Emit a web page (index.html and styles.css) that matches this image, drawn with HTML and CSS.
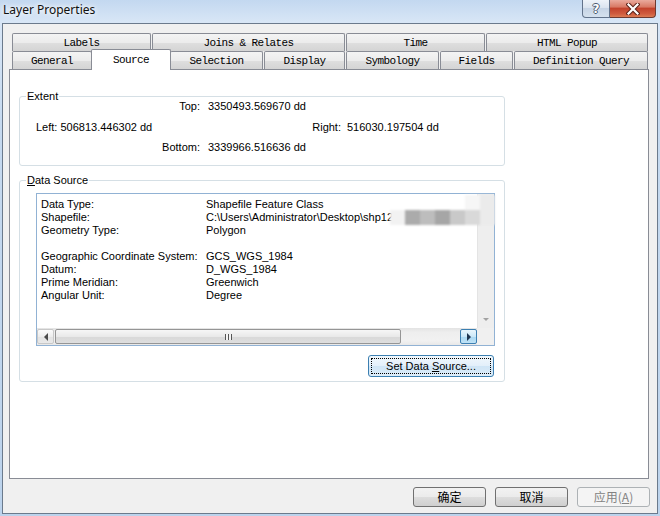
FILE: index.html
```html
<!DOCTYPE html>
<html>
<head>
<meta charset="utf-8">
<title>Layer Properties</title>
<link rel="stylesheet" href="styles.css">
</head>
<body>
<div class="window">
  <div class="titlebar">
    <div class="title">Layer Properties</div>
    <div class="caption">
      <div class="cap-btn help">?</div>
      <div class="cap-btn close">
        <svg width="14" height="12" viewBox="0 0 14 12"><path d="M2.5 1.5 L11.5 10.5 M11.5 1.5 L2.5 10.5" stroke="#5b2219" stroke-width="4.2" stroke-linecap="square"/><path d="M2.5 1.5 L11.5 10.5 M11.5 1.5 L2.5 10.5" stroke="#ffffff" stroke-width="2.2" stroke-linecap="square"/></svg>
      </div>
    </div>
  </div>
  <div class="client">
    <div class="tabs">
      <div class="tabrow">
        <div class="tab t-labels">Labels</div>
        <div class="tab t-joins">Joins &amp; Relates</div>
        <div class="tab t-time">Time</div>
        <div class="tab t-html">HTML Popup</div>
      </div>
      <div class="tabrow">
        <div class="tab t-general">General</div>
        <div class="tab sel">Source</div>
        <div class="tab t-selection">Selection</div>
        <div class="tab t-display">Display</div>
        <div class="tab t-symbology">Symbology</div>
        <div class="tab t-fields">Fields</div>
        <div class="tab t-defq">Definition Query</div>
      </div>
    </div>
    <div class="panel">
      <div class="group extent">
        <div class="gtitle">Extent</div>
        <div class="erow">
          <span class="lbl-top">Top:</span><span class="val-top">3350493.569670 dd</span>
        </div>
        <div class="erow mid">
          <span class="left">Left: 506813.446302 dd</span><span class="lbl-right">Right:</span><span class="val-right">516030.197504 dd</span>
        </div>
        <div class="erow bot">
          <span class="lbl-top">Bottom:</span><span class="val-top">3339966.516636 dd</span>
        </div>
      </div>
      <div class="group datasource">
        <div class="gtitle"><u>D</u>ata Source</div>
        <div class="list">
          <div class="list-content">
            <span>Data Type:</span><span>Shapefile Feature Class</span>
            <span>Shapefile:</span><span>C:\Users\Administrator\Desktop\shp12</span>
            <span>Geometry Type:</span><span>Polygon</span>
            <span class="blank"></span><span class="blank"></span>
            <span>Geographic Coordinate System:</span><span>GCS_WGS_1984</span>
            <span>Datum:</span><span>D_WGS_1984</span>
            <span>Prime Meridian:</span><span>Greenwich</span>
            <span>Angular Unit:</span><span>Degree</span>
          </div>
          <div class="vscroll">
            <div class="vs-btn"><span class="tri-down"></span></div>
          </div>
          <div class="hscroll">
            <div class="sb-btn sb-left"><span class="tri-left"></span></div>
            <div class="thumb"><span class="grip"></span></div>
            <div class="track"></div>
            <div class="sb-btn sb-right"><span class="tri-right"></span></div>
          </div>
          <div class="corner"></div>
          <div class="mosaic">
            <i></i><i></i><i></i><i></i><i></i><i class="m1"></i><i class="m2"></i>
            <i class="m3"></i><i class="m4"></i><i class="m5"></i><i class="m6"></i><i class="m7"></i><i class="m8"></i><i class="m9"></i>
          </div>
        </div>
        <div class="setbtn"><div class="focus"><span>Set Data <u>S</u>ource...</span></div></div>
      </div>
    </div>
    <div class="buttons">
      <div class="btn">确定</div>
      <div class="btn">取消</div>
      <div class="btn disabled">应用(<u>A</u>)</div>
    </div>
  </div>
</div>
</body>
</html>
```

FILE: styles.css
```css
* { box-sizing: border-box; }
html, body { margin: 0; padding: 0; }
body {
  width: 660px;
  height: 516px;
  overflow: hidden;
  background: #b9d0ea;
  font-family: "Liberation Sans", Arial, sans-serif;
  font-size: 11px;
  color: #000;
}
.window {
  width: 660px;
  height: 516px;
  display: flex;
  flex-direction: column;
  background: linear-gradient(to bottom, #c3d8f0 0px, #d8e6f6 22px, #c6daf0 120px, #bcd3ec 100%);
}
.titlebar {
  height: 23px;
  flex: none;
  display: flex;
}
.title {
  font-family: "Noto Sans", "Liberation Sans", sans-serif;
  font-size: 12px;
  line-height: 19px;
  padding-left: 3px;
  color: #101010;
  text-shadow: 0 0 4px #ffffff, 0 0 6px #ffffff;
}
.caption {
  margin-left: auto;
  margin-right: 4px;
  display: flex;
  height: 18px;
}
.cap-btn {
  height: 18px;
  display: flex;
  align-items: center;
  justify-content: center;
  border: 1px solid #62738b;
  border-top: none;
}
.help {
  width: 28px;
  border-radius: 0 0 0 4px;
  background: linear-gradient(#eef3f9, #dbe4ef 45%, #c6d4e5 50%, #d5e1ee 100%);
  font-family: "DejaVu Sans", sans-serif;
  font-weight: bold;
  font-size: 12px;
  color: #ffffff;
  text-shadow: 1px 0 #4c5b70, -1px 0 #4c5b70, 0 1px #4c5b70, 0 -1px #4c5b70;
}
.close {
  width: 46px;
  border-left: none;
  border-color: #6d3a31;
  border-radius: 0 0 4px 0;
  background: linear-gradient(#eaaa9d, #d97a66 40%, #c3432d 50%, #cf5a3e 80%, #dc7a52 100%);
}
.client {
  flex: 1;
  margin: 0 2px 2px 2px;
  border: 1px solid #6b7a8c;
  background: #f0f0f0;
  display: flex;
  flex-direction: column;
}
.tabs {
  padding: 9px 0 0 9px;
  display: flex;
  flex-direction: column;
  flex: none;
}
.tabrow {
  display: flex;
  gap: 1px;
  height: 18px;
}
.tab {
  flex: none;
  height: 18px;
  padding-top: 1px;
  border: 1px solid #898c95;
  border-bottom: none;
  border-radius: 2px 2px 0 0;
  background: linear-gradient(#f4f4f4, #ececec 50%, #dfdfdf 51%, #d4d4d4);
  font-family: "Liberation Mono", "DejaVu Sans Mono", monospace;
  font-size: 11px;
  letter-spacing: -0.6px;
  line-height: 17px;
  text-align: center;
  white-space: nowrap;
}
.t-labels { width: 139px; }
.t-joins { width: 193px; }
.t-time { width: 139px; }
.t-html { width: 162px; }
.t-general { width: 80px; }
.t-selection { width: 93px; }
.t-display { width: 81px; }
.t-symbology { width: 93px; }
.t-fields { width: 73px; }
.t-defq { width: 134px; }
.tab.sel {
  width: 80px;
  height: 21px;
  margin: -2px -2px -1px -2px;
  position: relative;
  z-index: 2;
  background: #ffffff;
  line-height: 18px;
}
.panel {
  flex: none;
  margin-left: 6px;
  width: 640px;
  height: 410px;
  border: 1px solid #898c95;
  background: #ffffff;
}
.group {
  position: relative;
  border: 1px solid #d5dfe5;
  border-radius: 3px;
  margin-left: 9px;
  width: 486px;
}
.gtitle {
  position: absolute;
  top: -7px;
  left: 6px;
  padding: 0 1px;
  background: #ffffff;
  line-height: 13px;
}
.extent {
  margin-top: 26px;
  height: 70px;
  padding-top: 3px;
}
.erow {
  display: flex;
  height: 13px;
  line-height: 13px;
  white-space: nowrap;
}
.erow.mid { margin-top: 8px; }
.erow.bot { margin-top: 7px; }
.lbl-top { width: 180px; text-align: right; }
.val-top { margin-left: 8px; }
.left { width: 266px; padding-left: 16px; }
.lbl-right { width: 55px; text-align: right; }
.val-right { margin-left: 6px; }
.datasource {
  margin-top: 14px;
  height: 202px;
  padding: 12px 9px 4px 16px;
  display: flex;
  flex-direction: column;
}
.list {
  flex: none;
  height: 153px;
  border: 1px solid #91b2d4;
  position: relative;
  display: grid;
  grid-template-columns: 1fr 17px;
  grid-template-rows: 1fr 17px;
  background: #ffffff;
}
.list-content {
  padding: 4px 0 0 4px;
  display: grid;
  grid-template-columns: 165px auto;
  grid-auto-rows: 13px;
  line-height: 13px;
  align-content: start;
  white-space: nowrap;
  overflow: hidden;
}
.vscroll {
  background: #eeeeee;
  border-left: 1px solid #e4e4e4;
  display: flex;
  flex-direction: column;
  justify-content: flex-end;
}
.vs-btn {
  height: 17px;
  display: flex;
  align-items: center;
  justify-content: center;
}
.tri-down {
  width: 0; height: 0;
  border-left: 3px solid transparent;
  border-right: 3px solid transparent;
  border-top: 3px solid #a2a2a2;
}
.hscroll {
  display: flex;
  background: linear-gradient(#e3e3e3, #eeeeee 25%, #f1f1f1 75%, #e8e8e8);
}
.sb-btn {
  width: 17px;
  flex: none;
  margin: 1px 0;
  border-radius: 2px;
  display: flex;
  align-items: center;
  justify-content: center;
}
.sb-left {
  border: 1px solid #c8c8c8;
  background: linear-gradient(#fbfbfb, #ededed 50%, #e2e2e2 51%, #e9e9e9);
}
.sb-right {
  border: 1px solid #3c7fb1;
  background: linear-gradient(#e9f6fd, #cbe8f8 50%, #a9d8f3 51%, #bfe2f6);
}
.tri-left {
  width: 0; height: 0;
  border-top: 4px solid transparent;
  border-bottom: 4px solid transparent;
  border-right: 4px solid #4a4a4a;
}
.tri-right {
  width: 0; height: 0;
  border-top: 4px solid transparent;
  border-bottom: 4px solid transparent;
  border-left: 4px solid #1e3550;
}
.thumb {
  flex: none;
  width: 346px;
  margin: 1px 0 1px 1px;
  border: 1px solid #959595;
  border-radius: 2px;
  background: linear-gradient(#f6f6f6, #e9e9e9 50%, #d8d8d8 51%, #dedede);
  display: flex;
  align-items: center;
  justify-content: center;
}
.grip {
  width: 7px;
  height: 6px;
  background: repeating-linear-gradient(to right, #555555 0 1px, #f4f4f4 1px 3px);
}
.track { flex: 1; }
.corner { background: #f0f0f0; }
.mosaic {
  position: absolute;
  left: 353px;
  top: 1px;
  width: 105px;
  height: 30px;
  display: grid;
  grid-template-columns: repeat(7, 15px);
  grid-template-rows: 15px 15px;
  filter: blur(1px);
  pointer-events: none;
}
.mosaic i { display: block; }
.m1 { background: #f6f6f6; }
.m2 { background: #ebebeb; }
.m3 { background: #f2f2f2; }
.m4 { background: #ababab; }
.m5 { background: #bdbdbd; }
.m6 { background: #a6a6a6; }
.m7 { background: #c9c9c9; }
.m8 { background: #d9d9d9; }
.m9 { background: #ebebeb; }
.setbtn {
  align-self: flex-end;
  margin-top: 9px;
  margin-right: 1px;
  width: 126px;
  height: 22px;
  border: 1px solid #3c7fb1;
  border-radius: 3px;
  background: linear-gradient(#f1f8fd, #e2effa 50%, #cfe5f6 51%, #dcecf9);
  padding: 2px;
}
.focus {
  height: 100%;
  border: 1px dotted #000;
  display: flex;
  align-items: center;
  justify-content: center;
  white-space: nowrap;
}
.buttons {
  flex: none;
  display: flex;
  justify-content: flex-end;
  gap: 9px;
  padding-right: 7px;
  margin-top: 8px;
}
.btn {
  width: 73px;
  height: 20px;
  border: 1px solid #707070;
  border-radius: 3px;
  background: linear-gradient(#f2f2f2, #ebebeb 50%, #dddddd 51%, #cfcfcf);
  font-family: "Noto Sans CJK SC", "Liberation Sans", sans-serif;
  font-size: 12px;
  line-height: 18px;
  text-align: center;
  white-space: nowrap;
}
.btn.disabled {
  border-color: #adb2b5;
  background: #f4f4f4;
  color: #838383;
}
```
